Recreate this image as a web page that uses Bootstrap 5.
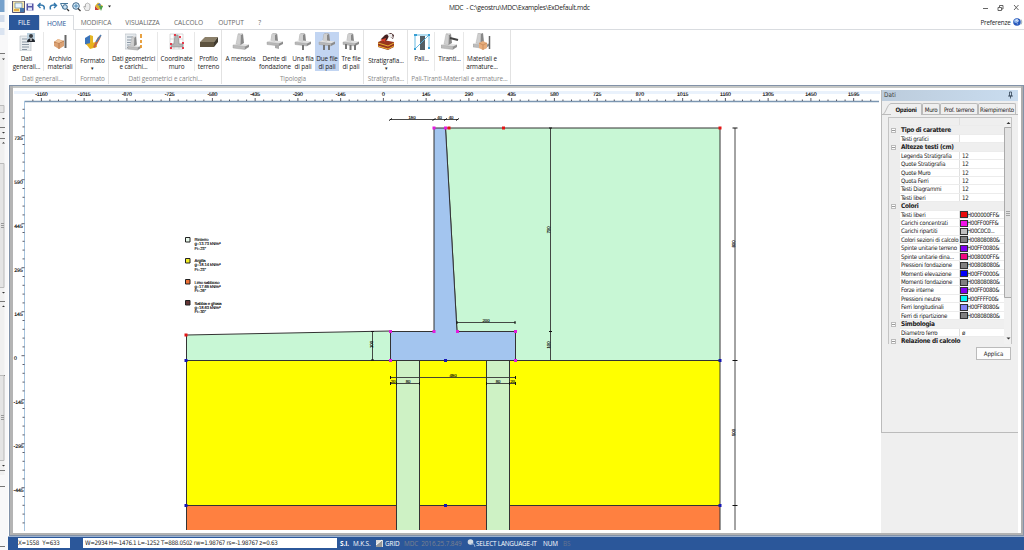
<!DOCTYPE html>
<html lang="it">
<head>
<meta charset="utf-8">
<title>MDC - C:\geostru\MDC\Examples\ExDefault.mdc</title>
<meta name="viewport" content="width=device-width, initial-scale=1">
<link href="https://cdn.jsdelivr.net/npm/bootstrap@5.3.0/dist/css/bootstrap.min.css" rel="stylesheet">
<style>
html,body{height:550px;overflow:hidden}
body{font-family:"Open Sans","Noto Sans",sans-serif;font-size:6.4px;line-height:8px;color:#333;background:#fff;letter-spacing:-.1px}
svg{display:block;flex:none}
.app-shell{width:1024px;height:550px}
.app-main{width:1016px}
.title-row{height:15px;padding:1px 0 0 4px}
.title-text{font-size:6.7px;color:#222;padding-top:3px;letter-spacing:-.26px}
.menu-row{height:15px;border-bottom:1px solid #d9dce0;font-size:6.6px;color:#666;line-height:15px}
.menu-row>span{height:15px;text-align:center;white-space:nowrap}
.menu-file{background:#2b579a;color:#fff;width:30px;margin-left:1px}
.menu-home{color:#2b579a;width:35px;background:#fff;border:1px solid #d9dce0;border-bottom:0}
.ribbon{height:55px;background:#fff;padding-left:1px}
.rb-group{height:54px;padding-top:2px;border-right:1px solid #e2e2e2;flex:none}
.rb-btn{height:39px;padding:1px 0 0 1px;color:#222;white-space:nowrap;text-align:center;flex:none;letter-spacing:-.14px}
.rb-sep{border-right:1px solid #e8e8e8}
.rb-btn svg{margin:0 auto 4px}
.rb-on{background:#c2d5f2}
.rb-cap{color:#888;text-align:center;white-space:nowrap;margin-top:3.5px;line-height:8px;padding-left:1px}
.caret{font-size:5px;line-height:5px;margin-top:1px}
.frame-box{height:451px;border-style:solid;border-color:#a0a2a4 #aeaeae #b2b2b2 #b4b4b4;border-width:1px 3px 3px 3px;border-left-width:4px;box-shadow:inset 0 2px #c6c8c6;position:relative;padding-top:4px;margin-left:1px;outline:1px solid #8292a8;outline-offset:-1px}
.side-dock{width:137px;background:#efefef;font-family:"DejaVu Sans Condensed","DejaVu Sans",sans-serif;font-size:6.1px;letter-spacing:-.27px}
.dock-body{height:343px;border-left:1px solid #bbb;border-bottom:1px solid #bbb}
.dock-head{height:11px;background:linear-gradient(90deg,#bcccdc,#c9dcef);color:#444;line-height:11px;padding:0 5px 0 2px;font-size:6.4px;letter-spacing:0}
.tab-strip{height:12px;margin-top:2px;border-bottom:1px solid #bbb;line-height:11px}
.tab-strip span{border:1px solid #bbb;border-bottom:0;border-radius:2px 2px 0 0;text-align:center;white-space:nowrap;color:#222;height:11px}
.tab-strip .tab-front{border-left:0;border-radius:0 2px 0 0;height:12px;background:#efefef;font-weight:bold;letter-spacing:-.28px;width:31px}
.grid-box{margin:2px 0 0 6px;width:124px;height:227px;overflow:hidden;border:1px solid #c4c4c4;border-bottom:0;background:#fff}
.prop-list{width:115px;flex:none}
.prop-row{height:8.43px;line-height:8.4px;white-space:nowrap;color:#222;border-bottom:1px solid #ececec}
.prop-row>i{width:11px;background:#ededed;flex:none;height:8.43px;padding:1.6px 0 0 2px;font-style:normal}
.prop-row>span{width:60px;padding-left:1px;flex:none;border-right:1px solid #e0e0e0}
.prop-row>em{font-style:normal;width:43px;padding-left:2px;flex:none;letter-spacing:-.35px;height:8.4px}
.prop-row b.swatch{width:8px;height:7px;border:1px solid #333;margin:.5px -1px 0 -2px;flex:none}
.prop-head{background:#efefef;font-weight:bold}
.prop-head>span{border:0;font-size:6.5px;letter-spacing:-.3px}
.prop-head i b{display:block;width:5px;height:5px;border:1px solid #bbb;background:linear-gradient(#fff 1px,#999 1px,#999 2px,#fff 2px)}
.apply-btn{width:35px;height:13px;margin:3px 0 0 94px;border:1px solid #bbb;background:#fdfdfd;color:#222;line-height:11px;text-align:center;letter-spacing:-.1px}
.status-row{height:14px;background:#2b579a;border-top:1px solid #9db2d0;color:#fff;line-height:13px;padding-left:10px;font-size:6.4px;white-space:nowrap}
.status-box{background:#fff;color:#222;height:10px;line-height:9px;margin-top:1px;flex:none;font-family:"DejaVu Sans Condensed",sans-serif;font-size:6.2px;letter-spacing:-.25px}
</style>
</head>
<body>
<svg width="0" height="0" class="position-absolute">
<defs>
<g id="wall"><path d="M1 12 5 10.500 17 11.500 13 14z" fill="#e3e3e3"/><path d="M1 12 13 13.500V16.500L1 15z" fill="#bcbcbc" stroke="#999" stroke-width=".4"/><path d="M13 13.500 17 11.500V14L13 16.500z" fill="#909090"/><path d="M6 1 8.500 0 11 1 9 2z" fill="#eee" stroke="#aaa" stroke-width=".4"/><path d="M6 1 9 2 8.500 12 4 11z" fill="#cfcfcf" stroke="#aaa" stroke-width=".4"/><path d="M9 2 11 1 12 10 8.500 12z" fill="#888"/></g>
<g id="pwall"><path d="M6 1 8.500 0 11 1V7L9 8 5 7z" fill="#ccc" stroke="#999" stroke-width=".5"/><path d="M9 2 11 1 12 8 9 9z" fill="#888"/><path d="M1 9 5 7 17 8.500 13 10.500z" fill="#e2e2e2"/><path d="M1 9 13 10.500V13L1 11.500z" fill="#b7b7b7" stroke="#999" stroke-width=".4"/><path d="M13 10.500 17 8.500V11L13 13z" fill="#8c8c8c"/><path d="M6 1 9 2V9L5 8z" fill="#d0d0d0"/></g>
<g id="doc"><path d="M1 2H12V17H1z" fill="#e9edf0" stroke="#b4bac0" stroke-width=".6"/><path d="M3 5H9M3 8H10M3 10.500H10M3 13H10M3 15.500H8" stroke="#8b98a5"/></g>
</defs>
</svg>
<div class="app-shell d-flex">
  <svg width="8" height="550" viewBox="0 0 8 550">
    <path fill="#f8f8f9" d="M0 0H8V550H0z"/><path fill="#76a1cb" d="M0 0H4.500V12H0z"/><path fill="#d2dceb" d="M0 15H4.500V22H0z"/><path fill="#dbe4f1" d="M0 28H4.500V35H0z"/>
    <path fill="#f0f0f0" d="M0 54H4.500V475H0z"/><path stroke="#777" d="M0 53.500H5M0 127.500H5M0 138.500H5M0 301.500H5M0 375.500H5M0 470.500H5M0 486.500H5M0 546.500H5"/>
    <path fill="#e4e4e4" stroke="#bbb" d="M-1 105.500H4V112.500H-1zM-1 163.500H4V287.500H-1zM-1 375.500H4V460.500H-1z"/>
    <path stroke="#999" d="M1 223.500H4M1 225.500H4M1 227.500H4M1 415.500H4M1 417.500H4M1 419.500H4"/>
    <path fill="#333" d="M2 58.500H5L3.500 60zM2 118H5L3.500 119.500zM2 132H5L3.500 133.500zM2 143.500H5L3.500 142zM2 292H5L3.500 293.500zM2 307H5L3.500 305.500zM2 465H5L3.500 466.500z"/>
  </svg>
  <div class="app-main d-flex flex-column">
    <header class="title-row d-flex">
      <svg width="106" height="14" viewBox="12 1 106 14">
        <path d="M12.500 1H24.500V12.500H12.500z" fill="#f9e7aa" stroke="#557"/><path d="M15 3H22V8H15z" fill="#e8f4fd" stroke="#689" stroke-width=".7"/><path d="M20 8H24V12H20z" fill="#4676ad"/><path d="M14 10H19" stroke="#db9a26" stroke-width="1.500"/>
        <path d="M26.500 3.500H33.500V10.500H26.500z" fill="#5555a6"/><path d="M28 3.500H32V6H28zM28 7.500H32V10.500H28z" fill="#dfe2f5"/>
        <path d="M44 9.500C45.500 5 41 4.500 38.500 5.500M40.500 3 38 5.500 40.500 8M50.500 9.500C49 5 53 4.500 56 5.500M54 3 56.500 5.500 54 8" fill="none" stroke="#3478ad" stroke-width="1.400"/>
        <path d="M60.500 3.500H68M60.500 3.500 63.500 9" stroke="#45769a" fill="none"/><circle cx="65" cy="7" r="2.300" fill="#cbe1f1" stroke="#32658c"/><path d="M67 9 69 11" stroke="#333" stroke-width="1.300"/>
        <circle cx="76" cy="6" r="3.300" fill="#d9ebf7" stroke="#40698b"/><path d="M74 6H78M76 4V8" stroke="#3478ad" stroke-width=".8"/><path d="M78 8.500 80.500 11" stroke="#333" stroke-width="1.300"/>
        <path d="M85.500 10.500 84 7.500V6L85.500 7V4L86.500 3.500 87.500 3 88.500 3.500 90 4.500V8L89 10.500z" fill="#eee" stroke="#999" stroke-width=".7"/>
        <path d="M98 2.500 103 6 99 10 95 6z" fill="#dfb72b"/><path d="M95 6 99 10 95 10z" fill="#c6403a"/><path d="M99 6 103 6 101 11z" fill="#50a04a"/><path d="M97 5 100 3 101 6z" fill="#4978c5"/>
        <path d="M108 5.500H111L109.500 7.500z" fill="#222"/>
      </svg>
      <div class="title-text" style="margin-left:331px">MDC &nbsp;- C:\geostru\MDC\Examples\ExDefault.mdc</div>
      <svg class="ms-auto" width="44" height="14" viewBox="980 1 44 14"><path d="M983 8.500H988M1014 5 1018.500 10M1018.500 5 1014 10M998 7.500H1001.500V10.500H998zM999.500 7V5.500H1003V9H1002" fill="none" stroke="#555" stroke-width=".9"/></svg>
    </header>
    <nav class="menu-row d-flex">
      <span class="menu-file">FILE</span><span class="menu-home">HOME</span>
      <span style="width:44px">MODIFICA</span><span style="width:49px">VISUALIZZA</span><span style="width:43px">CALCOLO</span><span style="width:42px">OUTPUT</span><span style="width:15px">?</span>
      <span class="ms-auto text-dark" style="width:31px;font-size:6.3px;letter-spacing:-.2px">Preferenze</span>
      <svg width="13" height="14" viewBox="0 0 13 14"><circle cx="6" cy="7" r="3.800" fill="#2859bb"/><circle cx="5" cy="6" r="2" fill="#8db5ed"/><path d="M5 6C5 4 8 4.500 7 6.300L6.300 7.200M6.300 8.500V9.200" stroke="#fff" fill="none"/><path d="M10 4.500C11 6 11 8 10 9.500" stroke="#789" fill="none" stroke-width=".7"/></svg>
    </nav>
    <div class="ribbon d-flex">
      <section class="rb-group" style="width:67px"><div class="d-flex">
        <div class="rb-btn rb-sep" style="width:35px"><svg width="18" height="18" viewBox="0 0 18 18"><use href="#doc" x="1" y="1"/><path d="M9 0H17V9H9z" fill="#bdd1df"/><circle cx="13" cy="3" r="2" fill="#383c42"/><path d="M9 9C9 4 17 4 17 9z" fill="#23272e"/><path d="M13 5V8" stroke="#fff"/></svg>Dati<br>generali...</div>
        <div class="rb-btn" style="width:31px"><svg width="18" height="18" viewBox="0 0 18 18"><path d="M3 9 7 6 13 8V13L8 16 3 13z" fill="#dba173"/><path d="M3 9 8 10 13 8M8 10V16" stroke="#b97b4e" fill="none"/><path d="M14.500 2V15" stroke="#666" stroke-width="2"/><path d="M4 9 7 6 12 8 8 10z" fill="#efc49b"/></svg>Archivio<br>materiali</div></div>
        <div class="rb-cap">Dati generali...</div></section>
      <section class="rb-group" style="width:33px"><div class="rb-btn"><svg width="18" height="18" viewBox="0 0 18 18"><path d="M1 5 6 2V13L1 11z" fill="#3b74ba"/><path d="M6 2 9 3V13L6 13z" fill="#e5b626"/><path d="M2 11 12 9 13 14 6 16z" fill="#e8b21b"/><path d="M9 14 14 4 17 3 16 6 11 15z" fill="#ca6842"/><path d="M12 9 17 2" stroke="#5480ae" stroke-width="1.600"/></svg><div style="padding-top:2px">Formato</div><div class="caret">▾</div></div><div class="rb-cap">Formato</div></section>
      <section class="rb-group" style="width:113px"><div class="d-flex">
        <div class="rb-btn rb-sep" style="width:49px"><svg width="18" height="18" viewBox="0 0 18 18"><use href="#doc" x="-1" y="-1"/><g transform="translate(2 3) scale(.82 .86)"><use href="#wall"/></g><path d="M16 1V5M16 7V10M16 12V15" stroke="#e6982e" stroke-width="1.800"/></svg>Dati geometrici<br>e carichi...</div>
        <div class="rb-btn rb-sep" style="width:37px"><svg width="18" height="18" viewBox="0 0 18 18"><path d="M2 1H15V16H2zM6 1V16M11 1V16M2 6H15M2 11H15" fill="none" stroke="#ccc" stroke-width=".7"/><path d="M7 2H10L11 11H15V14H3V11H6z" fill="#b5b5b5" stroke="#888" stroke-width=".6"/><path d="M6 1H8V3H6zM11 3H13V5H11zM2 10H4V12H2zM14 9H16V11H14zM2 14H4V16H2zM14 14H16V16H14z" fill="#e53b4c"/></svg>Coordinate<br>muro</div>
        <div class="rb-btn" style="width:26px"><svg width="18" height="18" viewBox="0 0 18 18"><path d="M0 9 5 4H18L14 9z" fill="#8b806a"/><path d="M0 9H14V14H0z" fill="#5e533f"/><path d="M14 9 18 4V9L14 14z" fill="#403a2e"/></svg>Profilo<br>terreno</div></div>
        <div class="rb-cap">Dati geometrici e carichi...</div></section>
      <section class="rb-group" style="width:142px"><div class="d-flex">
        <div class="rb-btn" style="width:36px"><svg width="18" height="18" viewBox="0 0 18 18"><use href="#wall"/></svg>A mensola</div>
        <div class="rb-btn" style="width:32px"><svg width="18" height="18" viewBox="0 0 18 18"><use href="#pwall"/><path d="M9 12H13V16L9 15z" fill="#aaa"/></svg>Dente di<br>fondazione</div>
        <div class="rb-btn" style="width:25px"><svg width="18" height="18" viewBox="0 0 18 18"><use href="#pwall"/><path d="M9 12V17" stroke="#777" stroke-width="2"/></svg>Una fila<br>di pali</div>
        <div class="rb-btn rb-on" style="width:24px;padding-left:0"><svg width="18" height="18" viewBox="0 0 18 18"><use href="#pwall"/><path d="M6 12V17M11 12V17" stroke="#777" stroke-width="2"/></svg>Due file<br>di pali</div>
        <div class="rb-btn" style="width:24px;padding-left:0"><svg width="18" height="18" viewBox="0 0 18 18"><use href="#pwall"/><path d="M4 11V16M8.500 12V17M13 12V17" stroke="#777" stroke-width="2"/></svg>Tre file<br>di pali</div></div>
        <div class="rb-cap">Tipologia</div></section>
      <section class="rb-group" style="width:44px"><div class="rb-btn"><svg width="18" height="18" viewBox="0 0 18 18"><path d="M1 9 6 7 17 9V14L11 17 1 14z" fill="#98351e"/><path d="M1 10 11 13 17 10M1 13 11 16 17 13" stroke="#e9b335" fill="none" stroke-width="1"/><path d="M4 6 8 2 14 0 17 2 16 6 12 3 10 7 7 9z" fill="#422"/><path d="M10 1 15 1 16 5 12 4z" fill="#eee"/><path d="M3 7 9 5 8 9z" fill="#d53d27"/></svg><div style="padding-top:2px">Stratigrafia...</div><div class="caret">▾</div></div><div class="rb-cap">Stratigrafia...</div></section>
      <section class="rb-group" style="width:103px"><div class="d-flex">
        <div class="rb-btn rb-sep" style="width:27px"><svg width="18" height="18" viewBox="0 0 18 18"><path d="M7 3H12V17H7z" fill="#535d64"/><path d="M2 2H16V16M2 2V16M2 16 16 2" stroke="#55b2df" stroke-width=".9" fill="none"/><path d="M1 1H4V3H1zM15 1H17V3H15zM15 14H17V16H15zM1 15H3V17H1z" fill="#369ed3"/></svg>Pali...</div>
        <div class="rb-btn rb-sep" style="width:29px"><svg width="18" height="18" viewBox="0 0 18 18"><use href="#wall" x="-1"/><path d="M9 5 17 7" stroke="#444" stroke-width="2"/></svg>Tiranti...</div>
        <div class="rb-btn" style="width:35px"><svg width="18" height="18" viewBox="0 0 18 18"><use href="#wall" x="-1" y="-1"/><path d="M6 10 10 8 14 10V15L10 17 6 15z" fill="#e6ad7c"/><path d="M6 10 10 12 14 10M10 12V17" stroke="#c38455" fill="none" stroke-width=".7"/><path d="M16.500 3V16" stroke="#666" stroke-width="1.500"/></svg>Materiali e<br>armature...</div></div>
        <div class="rb-cap">Pali-Tiranti-Materiali e armature...</div></section>
    </div>
    <main class="frame-box d-flex">
      <svg id="plan" width="868" height="443" viewBox="13 90 868 443" font-family="Liberation Sans, sans-serif" text-rendering="geometricPrecision">
        <path fill="#fff" d="M13 90H881V533H13z"/><path fill="#eaf2fc" d="M14 91H880V94H14z"/>
        <path d="M24.500 101.500H879" stroke="#7b96b1" stroke-width="1.500"/><path d="M24.500 101V531" stroke="#a8c5df"/>
        <path id="ticks" stroke="#334" stroke-width=".8"/>
        <g id="marks" font-size="5.200" fill="#000" stroke="#000" stroke-width=".12"/>
        <path d="M186.500 335 390.500 331V360.500H186.500zM445.500 128H720V360.500H515.500V331.500H457z" fill="#c8f7d5" stroke="#333"/>
        <path d="M186.500 360.500H720V505.500H186.500z" fill="#ff0"/><path d="M186.500 505.500H720V530H186.500z" fill="#ff8040"/>
        <path d="M396.500 360.500H419.500V530H396.500zM486.500 360.500H509.500V530H486.500z" fill="#cef2c5"/>
        <path d="M186.500 530V360.500H720V530M186.500 505.500H396.500M419.500 505.500H486.500M509.500 505.500H720M396.500 360V530M419.500 360V530M486.500 360V530M509.500 360V530" fill="none" stroke="#333"/>
        <path d="M434 128H445.500L457 331.500H515.500V360.500H390.500V331.500H434z" fill="#a3c5ef" stroke="#333"/>
        <path d="M390 119.500H457.500M550.500 128V360M372.500 331V360M735 128V530M457 322.500H515.500M390.500 377.500H515.500M390.500 383.500H419.500M486.500 383.500H515.500" stroke="#333" fill="none" stroke-width=".9"/>
        <path d="M389 120.500 392 118.500M432.500 120.500 435.500 118.500M444 120.500 447 118.500M456 120.500 459 118.500M457 321V324M515 321V324M390.500 376V379M515.500 376V379M390.500 382V385M396.500 382V385M419.500 382V385M486.500 382V385M509.500 382V385M515.500 382V385M549 128H552M549 331.500H552M371 331.500H374M371 360H374M732.500 128H737.500M732.500 360.500H737.500M732.500 505.500H737.500" stroke="#111"/>
        <g fill="#000" font-size="4.300" text-anchor="middle" stroke="#000" stroke-width=".12">
          <text x="412" y="118.700">150</text><text x="439.500" y="118.700">40</text><text x="451" y="118.700">40</text><text x="486" y="321.500">200</text><text x="453" y="376.800">450</text>
          <text x="393" y="382.800">20</text><text x="408" y="382.800">80</text><text x="498" y="382.800">80</text><text x="512.500" y="382.800">20</text>
          <text transform="translate(550 230) rotate(-90)">700</text><text transform="translate(550 345) rotate(-90)">100</text><text transform="translate(373 344.500) rotate(-90)">100</text><text transform="translate(734.500 244) rotate(-90)">800</text><text transform="translate(734.500 432.500) rotate(-90)">500</text>
        </g>
        <path d="M432.500 126.500h3v3h-3zM444 126.500h3v3h-3zM389 330h3v3h-3zM432.500 330h3v3h-3zM456 330h3v3h-3zM514 330h3v3h-3zM389 359h3v3h-3zM514 359h3v3h-3z" fill="#e31bdc"/>
        <path d="M447.500 126.500h3v3h-3zM502 126.500h3v3h-3zM718.500 126.500h3v3h-3zM184.500 333.500h3v3h-3z" fill="#e31515"/>
        <path d="M184.500 359h3v3h-3zM444 359h3v3h-3zM718.500 359h3v3h-3zM184.500 504h3v3h-3zM444 504h3v3h-3zM718.500 504h3v3h-3z" fill="#1515b5"/>
        <g stroke="#222"><path fill="#e6f8ea" d="M185.500 237.500h4.500v4.500h-4.500z"/><path fill="#f2ee22" d="M185.500 258.500h4.500v4.500h-4.500z"/><path fill="#ee7136" d="M185.500 279.500h4.500v4.500h-4.500z"/><path fill="#653535" d="M185.500 300.500h4.500v4.500h-4.500z"/></g>
        <g font-size="4.200" fill="#000" stroke="#000" stroke-width=".12">
          <text x="194.500" y="241">Rinterro</text><text x="194.500" y="245.300" textLength="26">g=13.73 kN/m³</text><text x="194.500" y="249.600">Fi=23°</text>
          <text x="194.500" y="262">Argilla</text><text x="194.500" y="266.300" textLength="26">g=18.14 kN/m³</text><text x="194.500" y="270.600">Fi=23°</text>
          <text x="194.500" y="283.500" textLength="25">Limo sabbioso</text><text x="194.500" y="287.800" textLength="26">g=17.65 kN/m³</text><text x="194.500" y="292.100">Fi=26°</text>
          <text x="194.500" y="304.500" textLength="27">Sabbia e ghiaia</text><text x="194.500" y="308.800" textLength="26">g=18.63 kN/m³</text><text x="194.500" y="313.100">Fi=30°</text>
        </g>
      </svg>
      <aside class="side-dock"><div class="dock-body">
        <div class="dock-head d-flex justify-content-between"><span>Dati</span><svg width="5" height="9" viewBox="0 0 5 9"><path d="M1.500 2V6H3.500V2zM0 6H5M2.500 6V8.500" stroke="#345" fill="none" stroke-width=".8"/></svg></div>
        <div class="tab-strip d-flex"><svg width="9" height="12" viewBox="0 0 9 12"><path d="M0 12C4 11 5 1 9 .500" fill="none" stroke="#bbb"/></svg><span class="tab-front">Opzioni</span><span style="width:18px">Muro</span><span style="width:38px">Prof. terreno</span><span style="width:38px">Riempimento</span></div>
        <div class="grid-box d-flex"><div class="prop-list">
          <div class="prop-row d-flex" style="background:#efefef"><i></i><span></span><em></em></div>
          <div class="prop-row prop-head d-flex"><i><b></b></i><span>Tipo di carattere</span></div>
          <div class="prop-row d-flex"><i></i><span>Testi grafici</span><em></em></div>
          <div class="prop-row prop-head d-flex"><i><b></b></i><span>Altezze testi (cm)</span></div>
          <div class="prop-row d-flex"><i></i><span>Legenda Stratigrafia</span><em>12</em></div>
          <div class="prop-row d-flex"><i></i><span>Quote Stratigrafia</span><em>12</em></div>
          <div class="prop-row d-flex"><i></i><span>Quote Muro</span><em>12</em></div>
          <div class="prop-row d-flex"><i></i><span>Quota Ferri</span><em>12</em></div>
          <div class="prop-row d-flex"><i></i><span>Testi Diagrammi</span><em>12</em></div>
          <div class="prop-row d-flex"><i></i><span>Testi liberi</span><em>12</em></div>
          <div class="prop-row prop-head d-flex"><i><b></b></i><span>Colori</span></div>
          <div class="prop-row d-flex"><i></i><span>Testi liberi</span><em class="d-flex"><b class="swatch" style="background:#e80c0c"></b>H000000FF&amp;</em></div>
          <div class="prop-row d-flex"><i></i><span>Carichi concentrati</span><em class="d-flex"><b class="swatch" style="background:#f014e8"></b>H00FF00FF&amp;</em></div>
          <div class="prop-row d-flex"><i></i><span>Carichi ripartiti</span><em class="d-flex"><b class="swatch" style="background:#c0c0c0"></b>H00C0C0...</em></div>
          <div class="prop-row d-flex"><i></i><span>Colori sezioni di calcolo</span><em class="d-flex"><b class="swatch" style="background:#808080"></b>H00808080&amp;</em></div>
          <div class="prop-row d-flex"><i></i><span>Spinte unitarie terreno</span><em class="d-flex"><b class="swatch" style="background:#8000f0"></b>H00FF0080&amp;</em></div>
          <div class="prop-row d-flex"><i></i><span>Spinte unitarie dina...</span><em class="d-flex"><b class="swatch" style="background:#f00880"></b>H008000FF&amp;</em></div>
          <div class="prop-row d-flex"><i></i><span>Pressioni fondazione</span><em class="d-flex"><b class="swatch" style="background:#808080"></b>H00808080&amp;</em></div>
          <div class="prop-row d-flex"><i></i><span>Momenti elevazione</span><em class="d-flex"><b class="swatch" style="background:#0000f8"></b>H00FF0000&amp;</em></div>
          <div class="prop-row d-flex"><i></i><span>Momenti fondazione</span><em class="d-flex"><b class="swatch" style="background:#808080"></b>H00808080&amp;</em></div>
          <div class="prop-row d-flex"><i></i><span>Forze interne</span><em class="d-flex"><b class="swatch" style="background:#8000f0"></b>H00FF0080&amp;</em></div>
          <div class="prop-row d-flex"><i></i><span>Pressioni neutre</span><em class="d-flex"><b class="swatch" style="background:#00f5f5"></b>H00FFFF00&amp;</em></div>
          <div class="prop-row d-flex"><i></i><span>Ferri longitudinali</span><em class="d-flex"><b class="swatch" style="background:#8080f5"></b>H00FF8080&amp;</em></div>
          <div class="prop-row d-flex"><i></i><span>Ferri di ripartizione</span><em class="d-flex"><b class="swatch" style="background:#808080"></b>H00808080&amp;</em></div>
          <div class="prop-row prop-head d-flex"><i><b></b></i><span>Simbologia</span></div>
          <div class="prop-row d-flex"><i></i><span>Diametro ferro</span><em>ø</em></div>
          <div class="prop-row prop-head d-flex"><i><b></b></i><span>Relazione di calcolo</span></div>
        </div>
        <svg width="8" height="226" viewBox="0 0 8 226"><path fill="#f1f1f1" d="M0 0H8V226H0z"/><path d="M.500 9.500H7.500V179.500H.500z" fill="#e2e2e2" stroke="#aaa"/><path d="M2 93.500H6M2 95.500H6M2 97.500H6" stroke="#888" stroke-width=".7"/><path d="M2.500 6H6.500L4.500 4zM2.500 219.500H6.500L4.500 221.500z" fill="#333"/></svg>
        </div>
        <div class="apply-btn">Applica</div>
      </div></aside>
    </main>
    <footer class="status-row d-flex">
      <div class="status-box" style="width:52px">X=1558 &nbsp;Y=633</div>
      <div class="status-box" style="width:254px;margin-left:13px;padding-left:2px;letter-spacing:-.32px">W=2934 H=-1476.1 L=-1252 T=888.0502 rw=1.98767 rs=-1.98767 z=0.63</div>
      <span class="fw-bold" style="width:13px;margin-left:3px">S.I.</span><span style="width:23px">M.K.S.</span>
      <svg width="8" height="12" viewBox="0 0 8 12"><path d="M0 3H7V10H0z" fill="#ddd"/><path d="M0 8 6 3V10H0z" fill="#999"/><path d="M0 8 6 3" stroke="#fff"/></svg>
      <span style="width:19px;margin-left:1px">GRID</span><span style="width:63px;color:#7b818e">MDC &nbsp;2016.25.7.849</span>
      <svg width="9" height="12" viewBox="0 0 9 12"><circle cx="3.500" cy="5" r="2.800" fill="#d3dbe4"/><path d="M4 7H7L8 10" stroke="#8ba2c7" fill="none"/></svg>
      <span style="width:67px;letter-spacing:-.2px">SELECT LANGUAGE-IT</span><span style="width:20px">NUM</span><span style="color:#65748f">BS</span>
    </footer>
  </div>
</div>
<script src="https://cdn.jsdelivr.net/npm/bootstrap@5.3.0/dist/js/bootstrap.bundle.min.js"></script>
<script>
// Ruler graduations: a label every 145 cm, five divisions between labels.
const STEP_X = 42.75, STEP_Y = 44, ORIGIN_X = 383.4, ORIGIN_Y = 355.7;
const marks = document.getElementById('marks');
let d = '';
function label(x, y, s) {
  const t = document.createElementNS('http://www.w3.org/2000/svg', 'text');
  t.setAttribute('x', x); t.setAttribute('y', y);
  t.setAttribute('text-anchor', 'middle');
  t.textContent = s; marks.appendChild(t);
}
for (let i = -41; i <= 57; i++) {
  const x = ORIGIN_X + i * STEP_X / 5, major = i % 5 === 0;
  d += `M${x} ${major ? 98 : 99.5}V101`;
  if (major) label(x, 95.5, i / 5 * 145);
}
for (let i = -19; i <= 28; i++) {
  const y = ORIGIN_Y - i * STEP_Y / 5;
  d += `M${i % 5 === 0 ? 21.5 : 22.5} ${y}H24.5`;
}
['735', '590', '445', '295', '145', '0', '-145', '-295', '-445'].forEach((s, i) =>
  label(s === '0' ? 15.5 : 18.5, 139.5 + i * STEP_Y, s));
document.getElementById('ticks').setAttribute('d', d);
</script>
</body>
</html>
